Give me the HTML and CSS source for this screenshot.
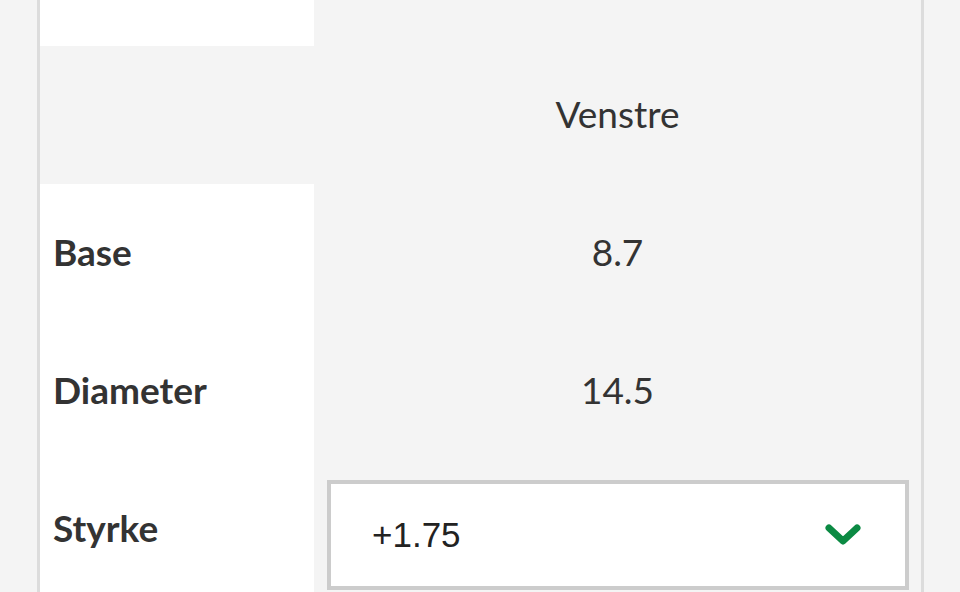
FILE: index.html
```html
<!DOCTYPE html>
<html lang="no">
<head>
<meta charset="utf-8">
<link rel="stylesheet" href="styles.css">
</head>
<body>
<div class="panel">
  <div class="grid">
    <div class="cell label"></div>
    <div class="cell value"></div>

    <div class="cell label head"></div>
    <div class="cell value">Venstre</div>

    <div class="cell label">Base</div>
    <div class="cell value">8.7</div>

    <div class="cell label">Diameter</div>
    <div class="cell value">14.5</div>

    <div class="cell label">Styrke</div>
    <div class="cell value select-cell">
      <div class="select">
        <span class="select-text">+1.75</span>
        <svg class="chev" width="36" height="24" viewBox="0 0 36 24"><path d="M4 5 L18 18 L32 5" fill="none" stroke="#0b8a43" stroke-width="7" stroke-linecap="round" stroke-linejoin="round"/></svg>
      </div>
    </div>
  </div>
</div>
</body>
</html>
```
FILE: styles.css
```css
html, body {
  margin: 0;
  padding: 0;
  background: #f4f4f4;
  overflow: hidden;
}
body {
  width: 960px;
  height: 592px;
  font-family: "Lato", "Open Sans", sans-serif;
  color: #333;
}
.panel {
  margin-left: 37px;
  width: 881px;
  border-left: 3px solid #dcdcdc;
  border-right: 3px solid #dcdcdc;
}
.grid {
  display: grid;
  grid-template-columns: 274px 1fr;
  grid-auto-rows: 138px;
  margin-top: -92px;
}
.cell {
  display: flex;
  align-items: center;
  padding-bottom: 4px;
  box-sizing: border-box;
}
.label {
  background: #fff;
  font-weight: 700;
  font-size: 37px;
  padding-left: 13px;
}
.label.head {
  background: #f4f4f4;
}
.value {
  justify-content: center;
  font-size: 37px;
  background: #f4f4f4;
}
.select-cell {
  padding: 20px 12px 0 13px;
  align-items: flex-start;
}
.select {
  box-sizing: border-box;
  width: 100%;
  height: 110px;
  background: #fff;
  border: 4px solid #cccccc;
  display: flex;
  align-items: center;
  justify-content: space-between;
  padding: 0 44px 0 41px;
}
.select-text {
  font-family: "Liberation Sans", Arial, sans-serif;
  font-size: 35px;
  color: #222;
}
.chev {
  display: block;
}
```
